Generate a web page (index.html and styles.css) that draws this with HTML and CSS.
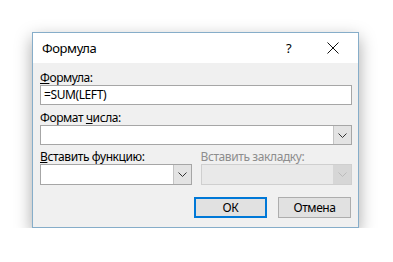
FILE: index.html
```html
<!DOCTYPE html>
<html lang="ru">
<head>
  <meta charset="UTF-8">
  <title>Формула</title>
  <link rel="stylesheet" href="styles.css">
</head>
<body>

  <div class="dialog">
    <div class="titlebar">
      <span class="title">Формула</span>
      <span class="help">?</span>
      <span class="close">
        <svg width="12" height="12" viewBox="0 0 12 12"><path d="M0.5 0.5 L11.5 11.5 M11.5 0.5 L0.5 11.5" stroke="#111" stroke-width="1" fill="none"/></svg>
      </span>
    </div>

    <div class="content">
      <label class="lbl first"><u>Ф</u>ормула:</label>
      <div class="field">=SUM(LEFT)</div>

      <label class="lbl">Формат <u>ч</u>исла:</label>
      <div class="combo">
        <div class="combo-text"></div>
        <div class="combo-btn">
          <svg width="9" height="5" viewBox="0 0 9 5"><path d="M0.5 0.5 L4.5 4.5 L8.5 0.5" stroke="#333" stroke-width="1" fill="none"/></svg>
        </div>
      </div>

      <div class="columns">
        <div class="col">
          <label class="lbl"><u>В</u>ставить функцию:</label>
          <div class="combo tall">
            <div class="combo-text"></div>
            <div class="combo-btn">
              <svg width="9" height="5" viewBox="0 0 9 5"><path d="M0.5 0.5 L4.5 4.5 L8.5 0.5" stroke="#333" stroke-width="1" fill="none"/></svg>
            </div>
          </div>
        </div>
        <div class="col">
          <label class="lbl disabled">Вставить закладку:</label>
          <div class="combo tall off">
            <div class="combo-text"></div>
            <div class="combo-btn">
              <svg width="9" height="5" viewBox="0 0 9 5"><path d="M0.5 0.5 L4.5 4.5 L8.5 0.5" stroke="#bbb" stroke-width="1" fill="none"/></svg>
            </div>
          </div>
        </div>
      </div>

      <div class="buttons">
        <button class="btn default">ОК</button>
        <button class="btn">Отмена</button>
      </div>
    </div>
  </div>

</body>
</html>
```

FILE: styles.css
```css
body {
  margin: 0;
  padding: 32px 0 0 32px;
  background-color: #fff;
  font-family: "Noto Sans", "Open Sans", sans-serif;
  font-size: 12px;
  letter-spacing: -0.4px;
  color: #000;
}
.dialog {
  width: 327px;
  box-sizing: border-box;
  border: 1px solid #86adc9;
  background-color: #f0f0f0;
  box-shadow: 0 6px 16px rgba(0,0,0,0.35);
}
.titlebar {
  height: 30px;
  background-color: #fff;
  display: flex;
  align-items: center;
  padding-left: 9px;
}
.title {
  font-size: 13px;
  flex: 1;
}
.help {
  font-size: 13px;
  width: 14px;
  margin-right: 10px;
}
.close {
  width: 46px;
  display: flex;
  justify-content: center;
  margin-right: 2px;
}
.content {
  padding: 7px 6px 9px 7px;
}
.lbl {
  display: block;
  height: 15px;
  line-height: 15px;
  margin-top: 5px;
  white-space: nowrap;
}
.lbl.first {
  margin-top: 0;
}
.lbl.disabled {
  color: #8d8d8d;
}
.field {
  height: 20px;
  box-sizing: border-box;
  border: 1px solid #a6a6a6;
  background-color: #fff;
  padding-left: 3px;
  line-height: 18px;
}
.combo {
  display: flex;
  height: 20px;
  box-sizing: border-box;
  border: 1px solid #a6a6a6;
  background-color: #fff;
}
.combo.tall {
  height: 21px;
}
.combo-text {
  flex: 1;
}
.combo-btn {
  width: 17px;
  background-color: #e3e3e3;
  border-left: 1px solid #c4c4c4;
  display: flex;
  align-items: center;
  justify-content: center;
}
.combo.off {
  background-color: #e9e9e9;
  border-color: #cfcfcf;
}
.combo.off .combo-btn {
  background-color: #d6d6d6;
  border-left-color: #d6d6d6;
}
.columns {
  display: flex;
  gap: 9px;
}
.col {
  flex: 1;
}
.col .lbl {
  margin-top: 4px;
}
.buttons {
  display: flex;
  justify-content: flex-end;
  gap: 11px;
  margin-top: 12px;
  padding-right: 1px;
}
.btn {
  width: 73px;
  height: 21px;
  box-sizing: border-box;
  border: 1px solid #adadad;
  background-color: #e1e1e1;
  font-family: "Noto Sans", "Open Sans", sans-serif;
  font-size: 12px;
  letter-spacing: -0.4px;
  padding: 0;
  color: #000;
}
.btn.default {
  border: 2px solid #0078d7;
}
```
